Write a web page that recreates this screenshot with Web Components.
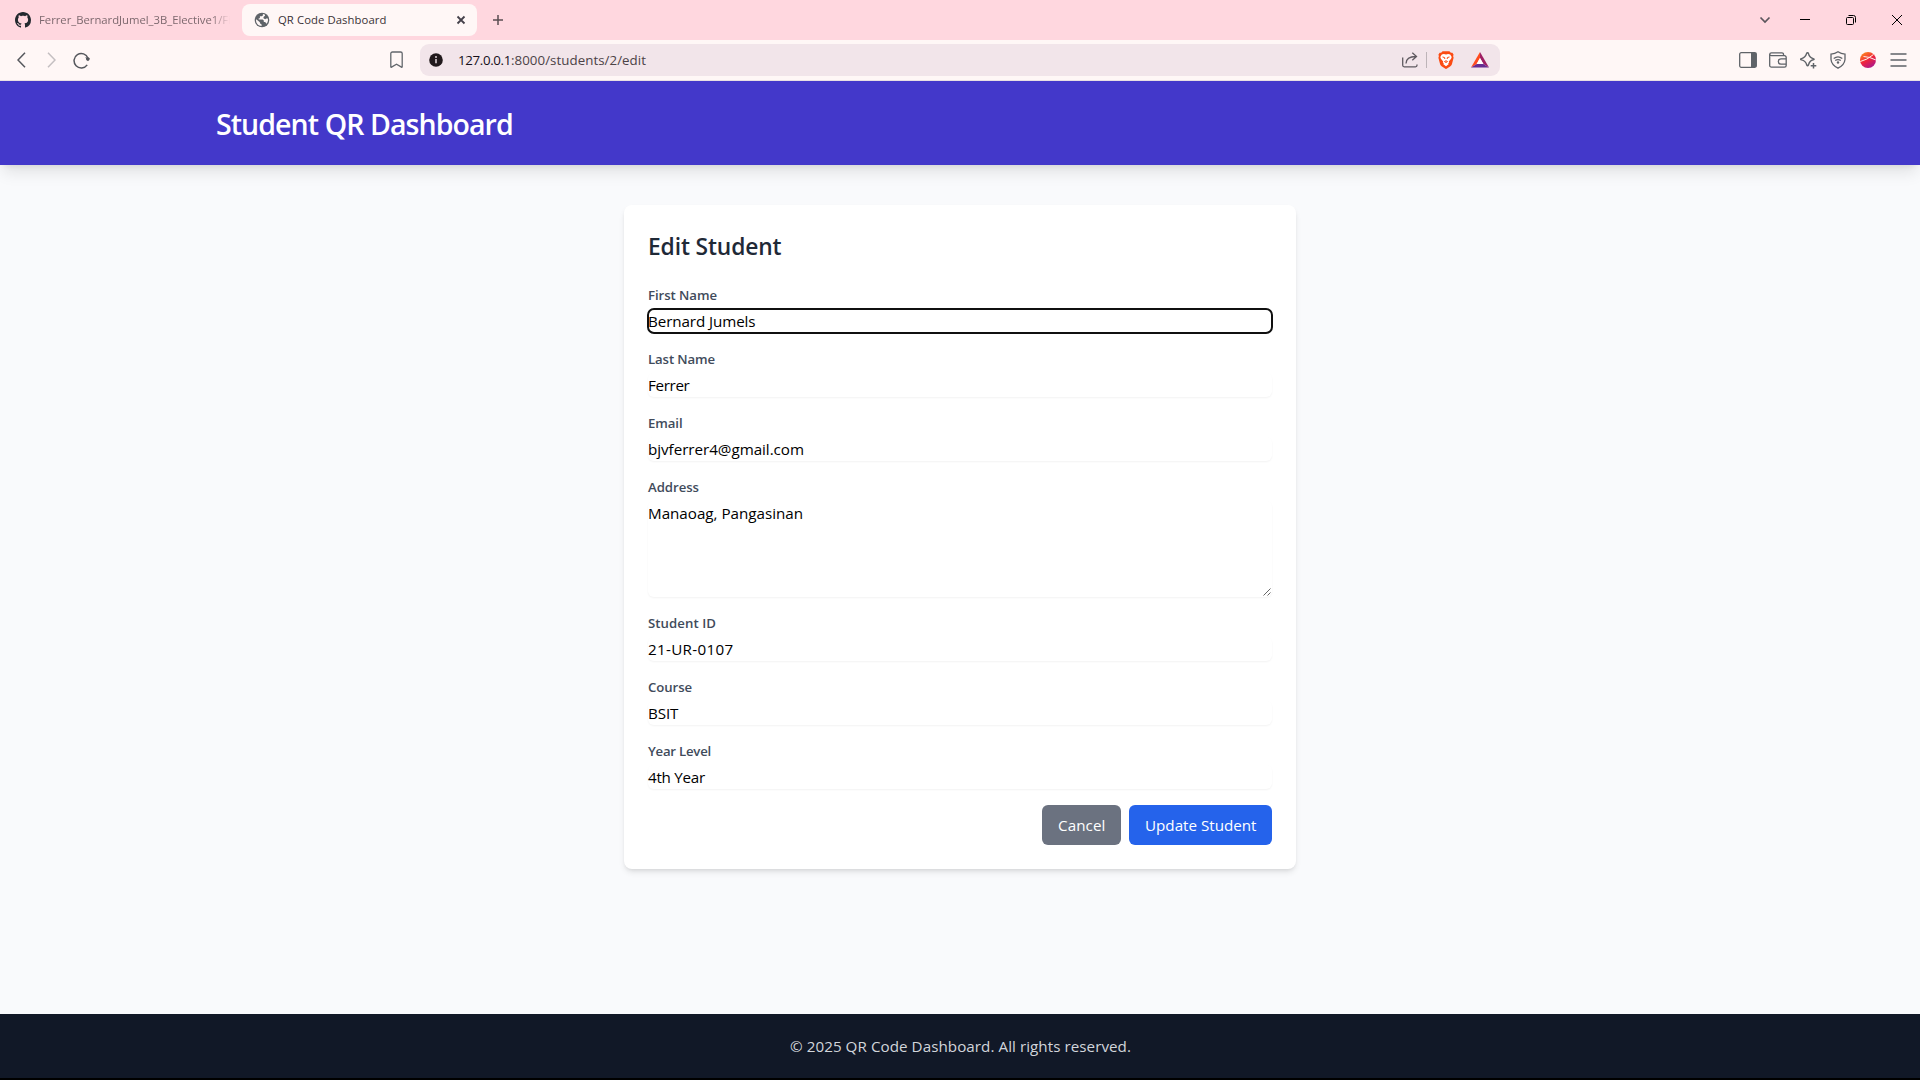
<!DOCTYPE html>
<html lang="en">
<head>
<meta charset="utf-8">
<title>QR Code Dashboard</title>
<style>
html,body{margin:0;height:100%;overflow:hidden;background:#000}
body{font-family:"Open Sans","Noto Sans",sans-serif}
</style>
</head>
<body>
<browser-window>
  <tab-strip slot="tabs"></tab-strip>
  <tool-bar slot="tools"></tool-bar>
  <student-page></student-page>
</browser-window>
<script>
const define = (name, html, after) => {
  const t = document.createElement('template');
  t.innerHTML = html;
  customElements.define(name, class extends HTMLElement {
    connectedCallback() {
      if (this.shadowRoot) return;
      this.attachShadow({mode: 'open'}).append(t.content.cloneNode(true));
      if (after) after(this, this.shadowRoot);
    }
  });
};

// A single line of text whose tracking is set so that it fills the width in "w".
define('fit-text', `<style>:host{display:block;white-space:nowrap}span{display:inline-block;white-space:pre}</style><span></span>`, (el, r) => {
  const s = r.querySelector('span');
  s.textContent = el.getAttribute('text');
  const w = +el.getAttribute('w');
  if (w) s.style.letterSpacing = ((w - s.getBoundingClientRect().width) / s.textContent.length) + 'px';
});

const icons = {
  github: [16,16,`<path fill="#24292f" d="M8 0C3.58 0 0 3.58 0 8c0 3.54 2.29 6.53 5.47 7.59.4.07.55-.17.55-.38 0-.19-.01-.82-.01-1.49-2.01.37-2.53-.49-2.69-.94-.09-.23-.48-.94-.82-1.13-.28-.15-.68-.52-.01-.53.63-.01 1.08.58 1.23.82.72 1.21 1.87.87 2.33.66.07-.52.28-.87.51-1.07-1.78-.2-3.64-.89-3.64-3.95 0-.87.31-1.59.82-2.15-.08-.2-.36-1.02.08-2.12 0 0 .67-.21 2.2.82.64-.18 1.32-.27 2-.27s1.36.09 2 .27c1.53-1.04 2.2-.82 2.2-.82.44 1.1.16 1.92.08 2.12.51.56.82 1.27.82 2.15 0 3.07-1.87 3.75-3.65 3.95.29.25.54.73.54 1.48 0 1.07-.01 1.93-.01 2.2 0 .21.15.46.55.38A8.01 8.01 0 0 0 16 8c0-4.42-3.58-8-8-8z"/>`],
  globe: [16,16,`<circle cx="8" cy="8" r="7.3" fill="#5f6368"/><path fill="#fff7f6" d="M2.2 7.3 5.9 10.2V11.2L7.6 12.6V14C4.3 13.8 2 11.2 2 8.2zM8.9 2.1V3.4L7.7 4.3H5.9V6.3H4.7V7.5H8.7L9.8 8.6V10H11.2L12.4 11.8C13.5 10.8 14 9.4 14 8 14 7.5 13.9 7 13.8 6.5H12.2L11.2 7.3 9.5 6.3V5L11 3.8V2.8C10.4 2.4 9.7 2.2 8.9 2.1z"/>`],
  x: [10,10,`<path d="M1.5 1.5l7 7m0-7l-7 7" stroke="#45414a" stroke-width="1.8"/>`],
  plus: [12,12,`<path d="M6 1v10M1 6h10" stroke="#5b4e53" stroke-width="1.5"/>`],
  chevron: [12,12,`<path d="M1.5 3.5L6 8l4.500-4.500" fill="none" stroke="#5b555c" stroke-width="1.7"/>`],
  min: [10,10,`<path d="M0 4.500h10" stroke="#000"/>`],
  restore: [10,10,`<rect x=".5" y="2.500" width="7" height="7" rx="1" fill="none" stroke="#000"/><path d="M2.500.5H7.500a2 2 0 0 1 2 2V7.500" fill="none" stroke="#000"/>`],
  close: [10,10,`<path d="M0 0l10 10M10 0L0 10" stroke="#000" stroke-width="1"/>`],
  back: [9,16,`<path d="M8 .8L1 8l7 7.200" fill="none" stroke="#55575c" stroke-width="1.5"/>`],
  fwd: [9,16,`<path d="M1 .8L8 8l-7 7.200" fill="none" stroke="#c4bfc1" stroke-width="1.5"/>`],
  reload: [17,17,`<path d="M14.200 12.800A7.200 7.200 0 1 1 15 6.200" fill="none" stroke="#55575c" stroke-width="1.500"/><path d="M12.200 5.200 16.800 6.200 15 9.200z" fill="#55575c"/><circle cx="14.800" cy="7" r="1.800" fill="#55575c"/>`],
  bookmark: [13,18,`<path d="M.8 2.600a1.600 1.600 0 0 1 1.600-1.600h8.200a1.600 1.600 0 0 1 1.600 1.600v13.200q0 .8-.7.3L6.500 13.200l-5 2.900q-.7.5-.7-.3z" fill="none" stroke="#63676c" stroke-width="1.300"/>`],
  info: [14,14,`<circle cx="7" cy="7" r="6.800" fill="#21191c"/><path d="M7 6v4.200" stroke="#f2e5ea" stroke-width="1.400"/><circle cx="7" cy="4" r=".9" fill="#f2e5ea"/>`],
  share: [16,16,`<path d="M.7 5.500V13.300a1.500 1.500 0 0 0 1.500 1.500H13.500a1.500 1.500 0 0 0 1.500-1.500V12.500M4 11.500C4.200 7 6.500 4.400 14 4.500M10.300.8L14.500 4.500 10.300 8.300" fill="none" stroke="#5f5a60" stroke-width="1.300"/>`],
  brave: [16,18,`<path fill="#fb4b13" d="M4.600.2h6.800l1.500 1.600 1.500-.1L15.600 3.700l-.5 1.400.5 1.600-1.700 6.600Q13.600 14.500 12.400 15.300L8.600 17.800Q8 18.100 7.400 17.800L3.600 15.300Q2.400 14.500 2.100 13.300L.4 6.700.9 5.100.4 3.700 1.600 1.700l1.500.1z"/><path fill="#fff" d="M8 3.500 10.200 3l2 .4 1.500 2.500-.6 1.900-2.300 2.700.4 1L10 12.300l.9.800L8 15.200 5.100 13.100 6 12.300 4.800 11.500l.4-1L2.900 7.800 2.300 5.900 3.800 3.400l2-.4z"/><path d="M4.500 6l2.100.5L6.800 8M11.500 6l-2.100.5L9.200 8M6.200 10.400 8 11.500l1.800-1.100M8 9v2" fill="none" stroke="#fb4b13" stroke-width="1"/>`],
  bat: [18,16,`<path fill="#ff4b1f" d="M9 0 0 15.500 5.800 12 9 6z"/><path fill="#9e1f63" d="M9 0 18 15.500 12.300 12 9 6z"/><path fill="#662d91" d="M0 15.500H18L12.300 12H5.800z"/><path fill="#fff" d="M9 5.900 5.500 12.100h7z"/>`],
  panel: [18,16,`<rect x=".7" y=".7" width="16.600" height="14.600" rx="1.500" fill="none" stroke="#5f6368" stroke-width="1.300"/><path d="M12 1h5.300v14H12z" fill="#5f6368"/>`],
  wallet: [18,16,`<path d="M14.500 3.500V2.300A1.500 1.500 0 0 0 13 .8H2.400A1.700 1.700 0 0 0 .7 2.300c0 .9.800 1.400 1.700 1.400H15.500a1.700 1.700 0 0 1 1.700 1.700v8a1.700 1.700 0 0 1-1.700 1.700h-13A1.700 1.700 0 0 1 .7 13.400V2.300M17.200 6.800H12a2.600 2.600 0 0 0 0 5.300h5.200" fill="none" stroke="#5f6368" stroke-width="1.300"/>`],
  sparkle: [17,17,`<path d="M7.500.8Q8.300.8 8.500 1.700 9.300 5.600 13.200 6.600q1.900.5 0 1.200Q9.500 8.800 8.500 12.900q-.9 2-1.800 0Q5.700 8.900 1.500 7.900-.4 7.200 1.500 6.600 5.500 5.600 6.500 1.700 6.800.8 7.500.8z" fill="none" stroke="#5f6368" stroke-width="1.400"/><path d="M13.500 11v5.600M10.700 13.800h5.600" stroke="#5f6368" stroke-width="1.500"/>`],
  shield: [16,18,`<path d="M8 .8Q11 3 15 3.200V8.500Q14.500 14 8 17.200 1.500 14 1 8.500V3.200Q5 3 8 .8z" fill="none" stroke="#5f6368" stroke-width="1.300"/><path d="M3.700 7.600q4.300-3.300 8.600 0M5.200 9.600q2.800-2 5.600 0" fill="none" stroke="#5f6368" stroke-width="1.200"/><circle cx="8" cy="11.500" r="1.200" fill="#5f6368"/>`],
  avatar: [16,16,`<defs><linearGradient id="g" x1=".2" y1="0" x2=".8" y2="1"><stop stop-color="#ff8a1c"/><stop offset=".5" stop-color="#ee243f"/><stop offset="1" stop-color="#a51694"/></linearGradient></defs><circle cx="8" cy="8" r="8" fill="url(#g)"/><path d="M.3 9.500Q7 8 13.500 2.500M3.500 4.500Q9 4.500 15.900 8" fill="none" stroke="#fff0e8" stroke-width="1"/>`],
  menu: [17,14,`<path d="M.5 1h16M.5 7h16M.5 13h16" stroke="#5f6368" stroke-width="1.500"/>`]
};
define('ui-icon', `<style>:host{display:block;flex:none}svg{display:block}</style>`, (el, r) => {
  const [w, h, body] = icons[el.getAttribute('name')];
  r.innerHTML += `<svg width="${w}" height="${h}" viewBox="0 0 ${w} ${h}">${body}</svg>`;
});

define('browser-window', `<style>:host{display:flex;flex-direction:column;width:1920px;height:1078px}::slotted(student-page){flex:1}</style>
<slot name="tabs"></slot><slot name="tools"></slot><slot></slot>`);

define('tab-strip', `<style>
:host{display:flex;align-items:center;box-sizing:border-box;height:40px;background:#ffd7df;font-size:11.3px;color:#3a3236}
.idle{display:flex;align-items:center;box-sizing:border-box;width:242px;padding-left:15px}
.clip{margin-left:8px;width:191px;overflow:hidden;color:#7d686e;-webkit-mask-image:linear-gradient(90deg,#000 172px,transparent)}
.tab{display:flex;align-items:center;box-sizing:border-box;width:235px;height:32px;padding:0 11px 0 12px;border-radius:8px;background:#fff7f6}
fit-text{padding-bottom:2px}
.tab fit-text{margin-left:8px;flex:1}
.plus{margin-left:15px;flex:1}
.win{display:flex;align-items:center;gap:35px;padding-right:18px}
.win ui-icon:nth-child(2){margin-left:-6px}.win ui-icon:nth-child(n+3){margin-left:1px}
</style>
<div class="idle"><ui-icon name="github"></ui-icon><div class="clip"><fit-text text="Ferrer_BernardJumel_3B_Elective1/Fi" w="192"></fit-text></div></div>
<div class="tab"><ui-icon name="globe"></ui-icon><fit-text text="QR Code Dashboard" w="108.500"></fit-text><ui-icon name="x"></ui-icon></div>
<ui-icon class="plus" name="plus"></ui-icon>
<div class="win"><ui-icon name="chevron"></ui-icon><ui-icon name="min"></ui-icon><ui-icon name="restore"></ui-icon><ui-icon name="close"></ui-icon></div>`);

define('tool-bar', `<style>
:host{display:flex;align-items:center;box-sizing:border-box;height:41px;background:#fff7f6;border-bottom:1px solid #e9e0e4;font-size:13.300px;color:#4c4347}
.nav{display:flex;align-items:center;padding-left:17px;width:373px}
.nav ui-icon:nth-child(2){margin-left:21px}.nav ui-icon:nth-child(3){margin-left:17px}
.url{display:flex;align-items:center;box-sizing:border-box;width:1080px;height:32px;margin-left:17px;padding:0 11px 0 9px;border-radius:9px;background:#f2e5ea}
.host{margin-left:15px;color:#17101a}.path{flex:1}
.sep{width:1px;height:16px;margin:0 11px 0 8px;background:#bdb4b8}
.bat{margin-left:17px}
.end{display:flex;align-items:center;gap:12px;margin-left:auto;padding-right:13px}
.end ui-icon:nth-child(3){margin-left:1px}.end ui-icon:nth-child(4){margin-left:1px}.end ui-icon:nth-child(5){margin-left:2px}.end ui-icon:nth-child(6){margin-left:2px}
</style>
<div class="nav"><ui-icon name="back"></ui-icon><ui-icon name="fwd"></ui-icon><ui-icon name="reload"></ui-icon></div>
<ui-icon name="bookmark"></ui-icon>
<div class="url"><ui-icon name="info"></ui-icon><fit-text class="host" text="127.0.0.1" w="53"></fit-text><fit-text class="path" text=":8000/students/2/edit" w="135"></fit-text>
<ui-icon name="share"></ui-icon><div class="sep"></div><ui-icon name="brave"></ui-icon><ui-icon class="bat" name="bat"></ui-icon></div>
<div class="end"><ui-icon name="panel"></ui-icon><ui-icon name="wallet"></ui-icon><ui-icon name="sparkle"></ui-icon><ui-icon name="shield"></ui-icon><ui-icon name="avatar"></ui-icon><ui-icon name="menu"></ui-icon></div>`);

define('form-field', `<style>
:host{display:block}
.label{font-size:13.200px;line-height:20px;font-weight:600;color:#414b5b}
.box{box-sizing:border-box;margin-top:4px;height:24px;border-radius:6px;font-size:15.200px;line-height:24px;color:#000;box-shadow:0 1px 2px rgba(0,0,0,.05)}
:host([focused]) .box{outline:2px solid #101010;outline-offset:-1px;box-shadow:none}
:host([multiline]) .box{height:96px;display:flex;justify-content:space-between}
svg{display:none;align-self:flex-end;margin:0 1px 1px 0}
:host([multiline]) svg{display:block}
</style><div class="label"></div><div class="box"><svg width="8" height="8" viewBox="0 0 8 8"><path d="M.5 7.500l7-7M4.500 7.500l3-3" stroke="#555" stroke-width=".9"/></svg></div>`, (el, r) => {
  const mk = (text, w) => {
    const f = document.createElement('fit-text');
    f.setAttribute('text', text); f.setAttribute('w', w); return f;
  };
  r.querySelector('.label').append(mk(el.getAttribute('label'), el.getAttribute('lw')));
  r.querySelector('.box').prepend(mk(el.getAttribute('value'), el.getAttribute('vw')));
});

define('action-button', `<style>
:host{display:flex;box-sizing:border-box;height:40px;padding-left:16px;border-radius:6px;background:var(--fill);color:#fff;font-size:15.200px;line-height:40px}
</style><slot></slot>`);

define('student-page', `<style>
:host{display:flex;flex-direction:column;background:#f9fafc;min-height:0}
header{box-sizing:border-box;height:84px;padding:24px 216px;background:#4338ca;color:#fff;font-size:28.500px;font-weight:600;line-height:39px;box-shadow:0 10px 15px -3px rgba(0,0,0,.1),0 4px 6px -4px rgba(0,0,0,.1)}
main{flex:1;display:flex;justify-content:center;align-items:flex-start;padding-top:40px}
section{box-sizing:border-box;width:672px;padding:24px;border-radius:8px;background:#fff;box-shadow:0 4px 6px -1px rgba(0,0,0,.1),0 2px 4px -2px rgba(0,0,0,.1)}
h2{margin:0 0 22px;padding-top:2px;font-size:22.800px;line-height:32px;font-weight:600;color:#1f2937}
form{display:flex;flex-direction:column;gap:16px}
.actions{display:flex;justify-content:flex-end;gap:8px}
.cancel{width:79px;--fill:#6b7280}.update{width:143px;--fill:#2563eb}
footer{display:flex;justify-content:center;height:64px;padding-left:1px;background:#111827;color:#d1d5db;font-size:15.200px;line-height:65px}
</style>
<header><fit-text text="Student QR Dashboard" w="296.800"></fit-text></header>
<main><section><h2><fit-text text="Edit Student" w="133.500"></fit-text></h2>
<form>
<form-field focused label="First Name" lw="69" value="Bernard Jumels" vw="107.500"></form-field>
<form-field label="Last Name" lw="67" value="Ferrer" vw="41.500"></form-field>
<form-field label="Email" lw="34.500" value="bjvferrer4@gmail.com" vw="156"></form-field>
<form-field multiline label="Address" lw="51" value="Manaoag, Pangasinan" vw="155"></form-field>
<form-field label="Student ID" lw="68" value="21-UR-0107" vw="85.500"></form-field>
<form-field label="Course" lw="44" value="BSIT" vw="30.300"></form-field>
<form-field label="Year Level" lw="63" value="4th Year" vw="57"></form-field>
<div class="actions"><action-button class="cancel"><fit-text text="Cancel" w="47.500"></fit-text></action-button><action-button class="update"><fit-text text="Update Student" w="111.500"></fit-text></action-button></div>
</form></section></main>
<footer><fit-text text="© 2025 QR Code Dashboard. All rights reserved." w="341"></fit-text></footer>`);
</script>
</body>
</html>
